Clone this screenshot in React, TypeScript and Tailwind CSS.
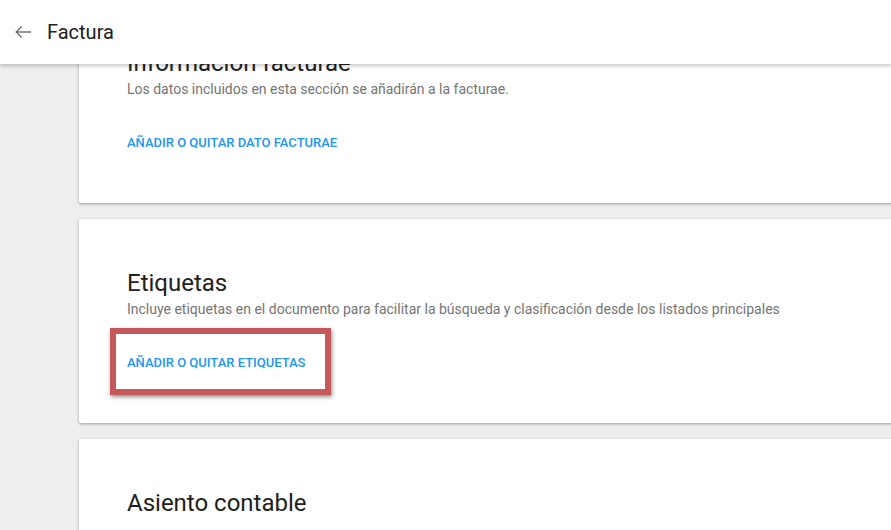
export default function App() {
  const cards = [
    {
      title: "Información facturae",
      text: "Los datos incluidos en esta sección se añadirán a la facturae.",
      link: "AÑADIR O QUITAR DATO FACTURAE",
    },
    {
      title: "Etiquetas",
      text: "Incluye etiquetas en el documento para facilitar la búsqueda y clasificación desde los listados principales",
      link: "AÑADIR O QUITAR ETIQUETAS",
      highlight: true,
    },
    {
      title: "Asiento contable",
      text: "",
      link: "",
    },
  ];

  return (
    <div className="relative h-[530px] w-full overflow-hidden bg-[#eeeeee] font-['Roboto',sans-serif]">
      <header className="absolute left-0 right-0 top-0 z-10 flex h-16 items-center bg-white shadow-[0_2px_4px_rgba(0,0,0,0.22)]">
        <button className="ml-[15px] flex h-6 w-4 items-center justify-center">
          <svg width="16" height="12" viewBox="0 0 16 12" fill="none">
            <path
              d="M16 6H1.2M6.6 0.6L1.2 6l5.4 5.4"
              stroke="#757575"
              strokeWidth="1.4"
            />
          </svg>
        </button>
        <h1 className="ml-4 text-[20px] leading-6 text-[#212121]">Factura</h1>
      </header>

      <main className="-mt-px flex flex-col gap-4 pl-[79px]">
        {cards.map((card) => (
          <section
            key={card.title}
            className="mr-[-20px] rounded-[2px] bg-white px-12 pb-[42px] pt-12 shadow-[0_1px_3px_rgba(0,0,0,0.35)]"
          >
            <h2 className="text-2xl leading-8 text-[#212121]">{card.title}</h2>
            <p className="text-[14px] leading-[20px] text-[#757575]">{card.text}</p>
            {card.link && (
              <div className="relative mt-[26px] flex h-9 items-center">
                {card.highlight && (
                  <div className="absolute left-[-17px] top-[-17px] h-[67px] w-[221px] border-[6px] border-[#c4585a] shadow-[1px_2px_4px_rgba(0,0,0,0.45)]" />
                )}
                <a className="relative text-[13px] font-medium text-[#2196f3]">
                  {card.link}
                </a>
              </div>
            )}
          </section>
        ))}
      </main>
    </div>
  );
}
